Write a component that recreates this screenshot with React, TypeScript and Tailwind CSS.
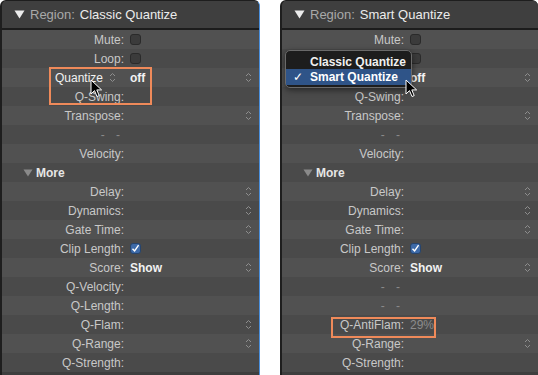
import React from "react";

type Row = {
  label?: string;
  value?: string;
  kind?: "check" | "checked" | "dash" | "more" | "popup" | "text" | "dim" | "hidden";
  stepper?: boolean;
};

const leftRows: Row[] = [
  { label: "Mute", kind: "check" },
  { label: "Loop", kind: "check" },
  { label: "Quantize", kind: "popup", value: "off", stepper: true },
  { label: "Q-Swing" },
  { label: "Transpose", stepper: true },
  { kind: "dash" },
  { label: "Velocity" },
  { kind: "more" },
  { label: "Delay", stepper: true },
  { label: "Dynamics", stepper: true },
  { label: "Gate Time", stepper: true },
  { label: "Clip Length", kind: "checked" },
  { label: "Score", kind: "text", value: "Show", stepper: true },
  { label: "Q-Velocity" },
  { label: "Q-Length" },
  { label: "Q-Flam", stepper: true },
  { label: "Q-Range", stepper: true },
  { label: "Q-Strength" },
];

// labels of Loop and Quantize sit under the open menu here
const rightRows: Row[] = [
  { label: "Mute", kind: "check" },
  { kind: "check" },
  { kind: "hidden", value: "off", stepper: true },
  { label: "Q-Swing" },
  { label: "Transpose", stepper: true },
  { kind: "dash" },
  { label: "Velocity" },
  { kind: "more" },
  { label: "Delay", stepper: true },
  { label: "Dynamics", stepper: true },
  { label: "Gate Time", stepper: true },
  { label: "Clip Length", kind: "checked" },
  { label: "Score", kind: "text", value: "Show", stepper: true },
  { kind: "dash" },
  { kind: "dash" },
  { label: "Q-AntiFlam", kind: "dim", value: "29%" },
  { label: "Q-Range", stepper: true },
  { label: "Q-Strength" },
];

function Stepper() {
  return (
    <svg width="7" height="11" viewBox="0 0 7 11" className="text-[#8e8e8e]">
      <path d="M1 4 L3.5 1.5 L6 4" fill="none" stroke="currentColor" strokeWidth="1" />
      <path d="M1 7 L3.5 9.5 L6 7" fill="none" stroke="currentColor" strokeWidth="1" />
    </svg>
  );
}

function Cursor() {
  return (
    <svg width="13" height="19" viewBox="0 0 13 19">
      <path
        d="M1 1 L1 15 L4.5 11.6 L7 17.5 L9.2 16.6 L6.8 10.9 L11.6 10.9 Z"
        fill="#000"
        stroke="#fff"
        strokeWidth="1"
        strokeLinejoin="round"
      />
    </svg>
  );
}

function PanelRow({ row, index }: { row: Row; index: number }) {
  const bg = index % 2 === 0 ? "bg-[#515151]" : "bg-[#4a4a4a]";

  if (row.kind === "more") {
    return (
      <div className={`h-[19px] flex items-center pl-[21px] ${bg}`}>
        <svg width="10" height="8" viewBox="0 0 10 8" className="mr-[3px]">
          <path d="M0.5 0.5 L9.5 0.5 L5 7.5 Z" fill="#8a8a8a" />
        </svg>
        <span className="text-[12px] font-bold text-[#e6e6e6]">More</span>
      </div>
    );
  }

  return (
    <div className={`h-[19px] flex items-center ${bg}`}>
      <div
        className={`w-[122px] shrink-0 text-right text-[12px] ${
          row.kind === "popup" ? "text-[#f2f2f2] pr-[8px]" : "text-[#c8c8c8]"
        }`}
      >
        {row.kind === "dash" ? (
          <span className="text-[#8a8a8a] tracking-[4px]">- -</span>
        ) : row.kind === "popup" ? (
          <span className="inline-flex items-center gap-[6px]">
            {row.label}
            <Stepper />
          </span>
        ) : row.label ? (
          `${row.label}:`
        ) : null}
      </div>
      <div className="flex-1 flex items-center pl-[6px]">
        {row.kind === "check" && (
          <div className="w-[11px] h-[11px] rounded-[3px] bg-[#3b3b3b] border border-[#2a2a2a]" />
        )}
        {row.kind === "checked" && (
          <div className="w-[11px] h-[11px] rounded-[3px] bg-[#3d6aa8] border border-[#27446b] flex items-center justify-center">
            <svg width="9" height="9" viewBox="0 0 9 9">
              <path d="M1.5 4.8 L3.6 7 L7.6 1.2" fill="none" stroke="#fff" strokeWidth="1.4" />
            </svg>
          </div>
        )}
        {(row.kind === "popup" || row.kind === "text" || row.kind === "hidden") && (
          <span className="text-[12px] font-bold text-[#f2f2f2]">{row.value}</span>
        )}
        {row.kind === "dim" && <span className="text-[12px] text-[#8c8c8c]">{row.value}</span>}
      </div>
      {row.stepper && (
        <div className="pr-[7px] flex items-center">
          <Stepper />
        </div>
      )}
    </div>
  );
}

function Panel({
  title,
  rows,
  children,
  className,
}: {
  title: string;
  rows: Row[];
  children?: React.ReactNode;
  className?: string;
}) {
  return (
    <div
      className={`relative h-[375px] bg-[#3e3e3e] rounded-t-[6px] border-l-2 border-t border-[#1e1e1e] overflow-hidden ${className ?? ""}`}
    >
      <div className="h-[29px] flex items-center pl-[12px] bg-[#3f3f3f] border-b-2 border-[#1c1c1c]">
        <svg width="11" height="9" viewBox="0 0 11 9" className="mr-[5px]">
          <path d="M0.5 0.5 L10.5 0.5 L5.5 8.5 Z" fill="#ececec" />
        </svg>
        <span className="text-[13px] text-[#a9a9a9]">Region:</span>
        <span className="text-[13px] text-[#ececec] ml-[5px]">{title}</span>
      </div>
      {rows.map((r, i) => (
        <PanelRow key={i} row={r} index={i} />
      ))}
      {children}
    </div>
  );
}

export default function App() {
  return (
    <div
      className="w-[538px] h-[375px] bg-white flex overflow-hidden"
      style={{ fontFamily: '"Liberation Sans", Arial, sans-serif' }}
    >
      <Panel title="Classic Quantize" rows={leftRows} className="w-[260px] border-r border-r-[#4a8fdc]">
        {/* highlight around quantize + swing */}
        <div className="absolute left-[47px] top-[66px] w-[103px] h-[38px] border-2 border-[#ef8a5a]" />
        <div className="absolute left-[88px] top-[78px]">
          <Cursor />
        </div>
      </Panel>

      <div className="w-[20px] shrink-0" />

      <Panel title="Smart Quantize" rows={rightRows} className="w-[258px]">
        {/* popup menu */}
        <div className="absolute left-[3px] top-[49px] w-[127px] h-[38px] rounded-[5px] bg-[#1d1d1d] border border-[#6a6a6a] py-[3px] shadow-[0_2px_6px_rgba(0,0,0,0.5)]">
          <div className="h-[15px] flex items-center pl-[24px] text-[12px] font-bold text-[#f0f0f0]">
            Classic Quantize
          </div>
          <div className="h-[16px] flex items-center bg-[#2f5488] text-[12px] font-bold text-white">
            <span className="w-[24px] pl-[7px] font-normal">✓</span>
            Smart Quantize
          </div>
        </div>
        <div className="absolute left-[123px] top-[78px]">
          <Cursor />
        </div>
        {/* highlight around antiflam */}
        <div className="absolute left-[49px] top-[316px] w-[105px] h-[21px] border-2 border-[#ef8a5a]" />
      </Panel>
    </div>
  );
}
